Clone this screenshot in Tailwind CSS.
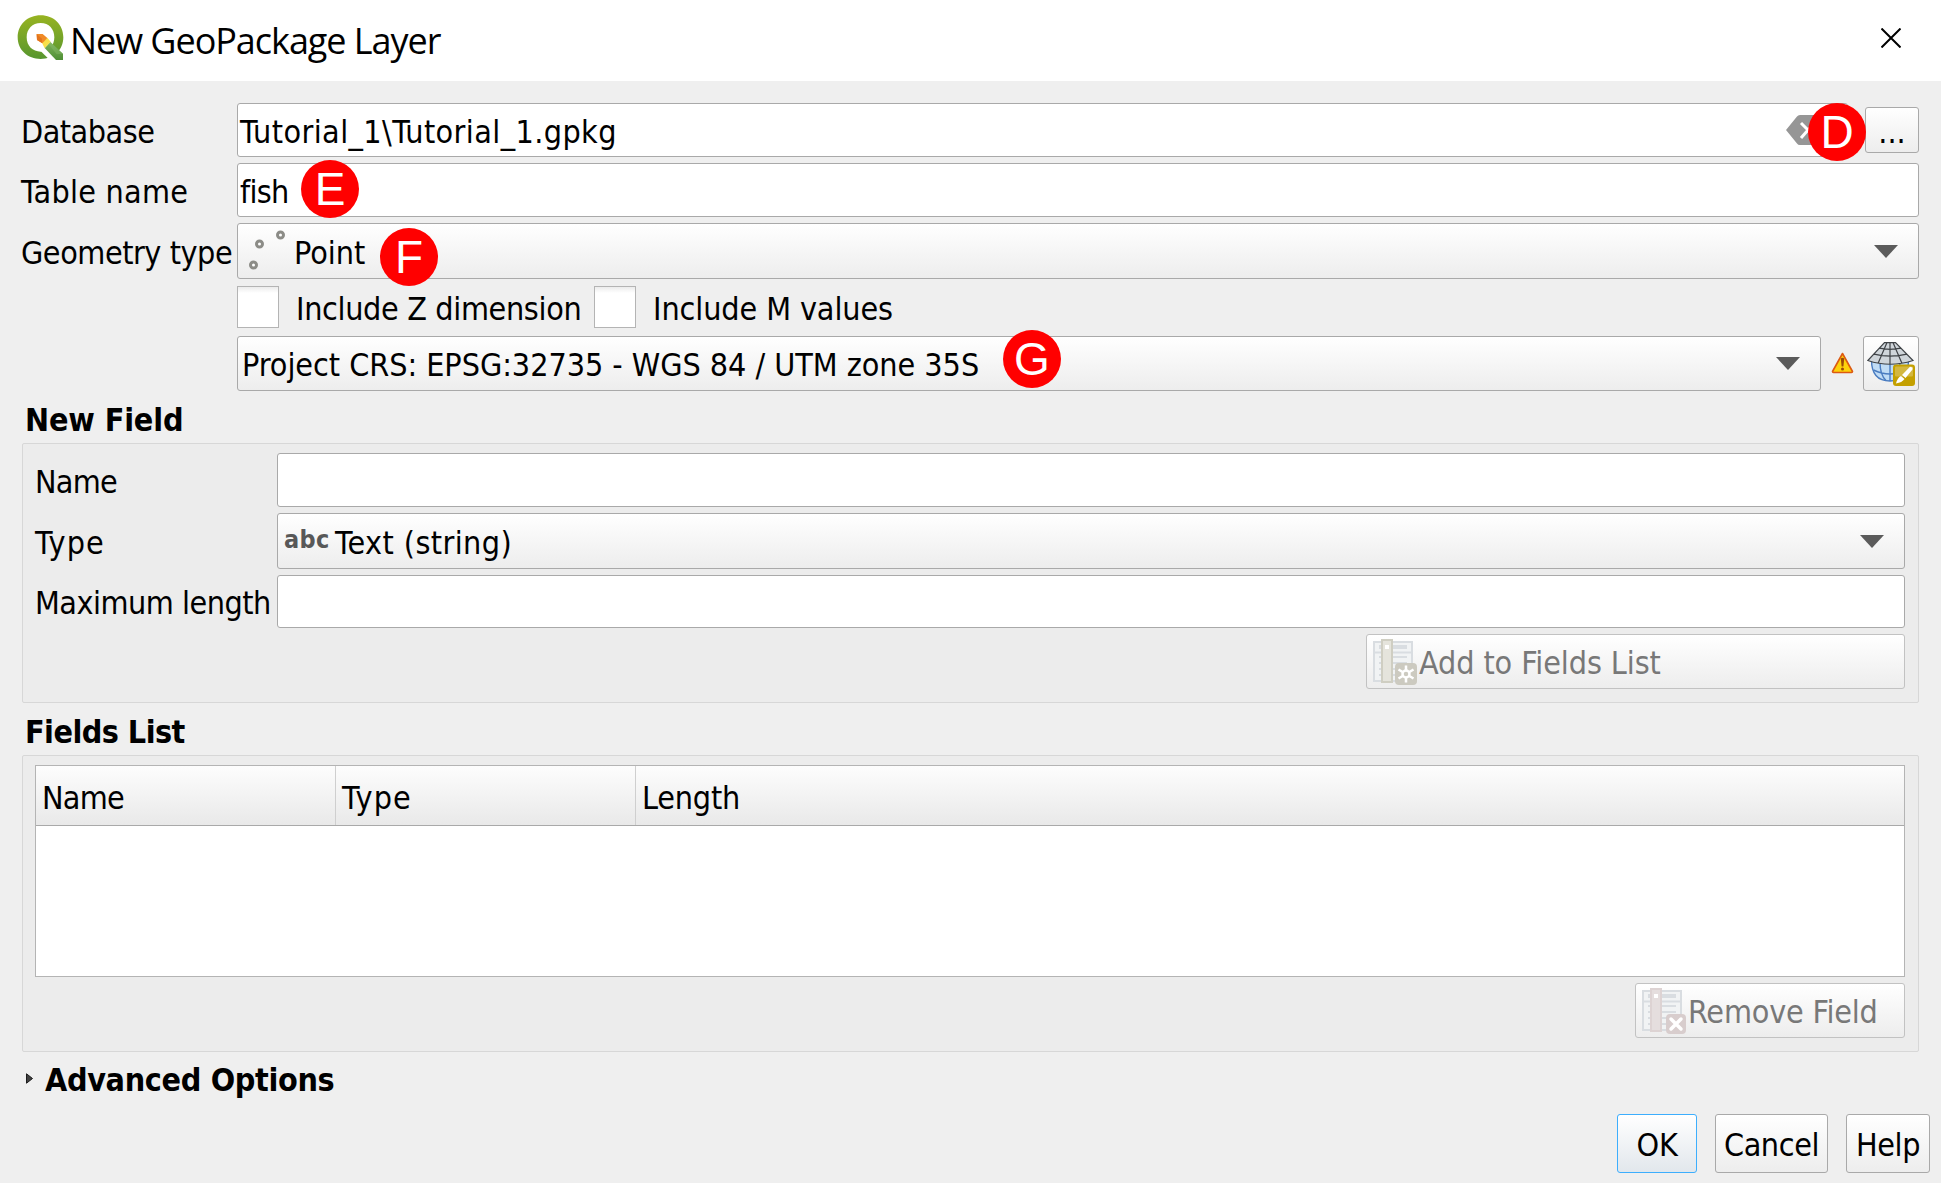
<!DOCTYPE html>
<html lang="en">
<head>
<meta charset="utf-8">
<title>New GeoPackage Layer</title>
<script src="https://cdn.jsdelivr.net/npm/@tailwindcss/browser@4"></script>
</head>
<body class="flex h-[1183px] w-[1941px] flex-col overflow-hidden bg-[#efefef] font-['DejaVu_Sans_Condensed','DejaVu_Sans',sans-serif] text-[32px] leading-[40px] whitespace-nowrap text-black">

<header class="flex h-[81px] shrink-0 items-start bg-white pt-[15px] pl-[17px]">
  <svg class="h-[46px] w-[47px]" viewBox="51 45 141 138">
    <defs>
      <linearGradient id="ring" x1="0" y1="0" x2="0" y2="1"><stop offset="0" stop-color="#97b321"/><stop offset="1" stop-color="#57962f"/></linearGradient>
      <linearGradient id="tail" x1="0" y1="0" x2="0" y2="1"><stop offset="0" stop-color="#7db35a"/><stop offset="1" stop-color="#4f8f35"/></linearGradient>
    </defs>
    <path fill="url(#ring)" fill-rule="evenodd" d="M122 46C161 46 190 74 190 112C190 150 161 177 122 177C83 177 53 150 53 112C53 74 83 46 122 46ZM122 69C97 69 80 87 80 112C80 138 98 155 122 155C146 155 163 137 163 112C163 87 147 69 122 69Z"/>
    <path fill="#fff" d="M120 143L134 145L150 155L172 181H150L121 152Z"/>
    <path fill="#fff" d="M152 122L163 112L192 147V166Z" opacity=".0"/>
    <path fill="url(#tail)" d="M134 144L151 126L189 161V180H168Z"/>
    <path fill="#8fbf70" d="M140 125L151 126L189 161L170 163Z" opacity=".35"/>
    <path fill="#f8e04a" d="M125 127L142 113L152 125L134 145Z"/>
    <path fill="#f08a26" d="M110 102H128L142 114L127 130L111 120Z"/>
    <path fill="#e3741d" d="M110 102L126 116V129L111 120Z"/>
  </svg>
  <h1 class="pt-[6px] pl-[6px] font-['Open_Sans','Noto_Sans',sans-serif] text-[36px] leading-[40px] tracking-[-1.05px]">New GeoPackage Layer</h1>
  <svg class="mt-[13px] mr-[40px] ml-auto h-5 w-5" viewBox="0 0 20 20" stroke="#000" stroke-width="2"><path d="M.5 .5L19.5 19.5M19.5 .5L.5 19.5"/></svg>
</header>

<main class="flex flex-1 flex-col pt-[22px] pl-[22px]">
  <section class="grid w-[1897px] grid-cols-[215px_1682px] gap-y-[6px]">
    <label class="-ml-px flex h-[54px] items-center pt-1 tracking-[-0.5px]">Database</label>
    <div class="flex h-[54px] items-center justify-between">
      <div class="relative flex h-[54px] w-[1611px] items-center rounded-[3px] border border-[#a9a9a9] bg-white pt-1 pl-[2px] tracking-[0.4px]">Tutorial_1\Tutorial_1.gpkg
        <svg class="absolute top-[11px] left-[1548px] h-[30px] w-[42px]" viewBox="0 0 42 30"><path fill="#969696" d="M0 15L11 1.500Q12 0 14 0H42V30H14Q12 30 11 28.500Z"/><path d="M15 8L22 15L15 23M29 8L22 15L29 23" fill="none" stroke="#fff" stroke-width="3"/></svg>
        <span class="absolute top-[-1px] left-[1570px] flex h-[58px] w-[58px] items-center justify-center rounded-full bg-[#f00] font-['Liberation_Sans',Arial,sans-serif] text-[46px] leading-[58px] tracking-normal text-white">D</span>
      </div>
      <button class="flex h-[46px] w-[54px] items-center justify-center rounded-[3px] border border-[#a9a9a9] bg-linear-to-b from-white to-[#ededed] pt-1">...</button>
    </div>

    <label class="-ml-px flex h-[54px] items-center pt-1 tracking-[0.25px]">Table name</label>
    <div class="relative flex h-[54px] items-center rounded-[3px] border border-[#a9a9a9] bg-white pt-1 pl-[2px] tracking-[-0.7px]">fish
      <span class="absolute top-[-4px] left-[63px] flex h-[58px] w-[58px] items-center justify-center rounded-full bg-[#f00] font-['Liberation_Sans',Arial,sans-serif] text-[46px] leading-[58px] tracking-normal text-white">E</span>
    </div>

    <label class="-ml-px flex h-[56px] items-center pt-1 tracking-[-0.45px]">Geometry type</label>
    <div class="relative flex h-[56px] items-center rounded-[3px] border border-[#a9a9a9] bg-linear-to-b from-white to-[#ededed] pl-[11px]">
      <svg class="mt-[-3px] h-[40px] w-[37px]" viewBox="0 0 37 40" fill="#fff" stroke="#8c8c87" stroke-width="3"><circle cx="4.500" cy="35" r="3"/><circle cx="10.500" cy="14" r="3"/><circle cx="31.500" cy="5" r="3"/></svg>
      <span class="pt-1 pl-[8px]">Point</span>
      <span class="absolute top-[4px] left-[142px] flex h-[58px] w-[58px] items-center justify-center rounded-full bg-[#f00] font-['Liberation_Sans',Arial,sans-serif] text-[46px] leading-[58px] tracking-normal text-white">F</span>
      <svg class="mr-[20px] ml-auto h-[13px] w-6" viewBox="0 0 24 13"><path fill="#5b5b5b" d="M0 0H24L12 13Z"/></svg>
    </div>
  </section>

  <div class="mt-[7px] ml-[215px] flex h-[42px] items-center">
    <span class="h-[42px] w-[42px] border border-[#b4b4b4] bg-linear-to-b from-[#ececec] to-white to-15%"></span>
    <label class="w-[315px] pt-1 pl-[17px] tracking-[-0.35px]">Include Z dimension</label>
    <span class="h-[42px] w-[42px] border border-[#b4b4b4] bg-linear-to-b from-[#ececec] to-white to-15%"></span>
    <label class="pt-1 pl-[17px] tracking-[-0.1px]">Include M values</label>
  </div>

  <div class="mt-[8px] ml-[215px] flex h-[55px] w-[1682px] items-center">
    <div class="relative flex h-[55px] w-[1584px] items-center rounded-[3px] border border-[#a9a9a9] bg-linear-to-b from-white to-[#ededed] pl-1">
      <span class="pt-[2px] tracking-[-0.04px]">Project CRS: EPSG:32735 - WGS 84 / UTM zone 35S</span>
      <span class="absolute top-[-7px] left-[765px] flex h-[58px] w-[58px] items-center justify-center rounded-full bg-[#f00] font-['Liberation_Sans',Arial,sans-serif] text-[46px] leading-[58px] tracking-normal text-white">G</span>
      <svg class="mr-[20px] ml-auto h-[13px] w-6" viewBox="0 0 24 13"><path fill="#5b5b5b" d="M0 0H24L12 13Z"/></svg>
    </div>
    <svg class="mt-[-2px] ml-[10px] h-[22px] w-[23px]" viewBox="0 0 23 22"><path d="M11.500 1.500L21.500 19.500Q21.500 20.500 20.500 20.500H2.500Q1.500 20.500 1.500 19.500Z" fill="#fdd20b" stroke="#dc5a12" stroke-width="1.600" stroke-linejoin="round"/><path d="M9.800 6.500Q11.500 5 13.200 6.500L12.400 14.500H10.600Z" fill="#9a4a08"/><circle cx="11.500" cy="17" r="1.500" fill="#9a4a08"/></svg>
    <button class="ml-auto flex h-[55px] w-[56px] items-center justify-center rounded-[3px] border border-[#a9a9a9] bg-linear-to-b from-white to-[#ededed]">
      <svg class="mt-[2px] h-[46px] w-[48px]" viewBox="0 0 48 46">
        <path d="M4.500 18Q4.500 39 23 39Q41.500 39 41.500 18Z" fill="#c0dcf5" stroke="#4a7cc0" stroke-width="1.400"/>
        <path d="M6.500 28Q23 36 39 28M23 20V39M13 20Q13 33 19 38.500M33 20Q33 33 27 38.500" fill="none" stroke="#4a7cc0" stroke-width="1.400"/>
        <path d="M17.500 .6H28.500L46 18.500Q23 26 .800 18.500Z" fill="#cfd5da"/>
        <path d="M17.500 .6H28.500L46 18.500Q23 26 .800 18.500ZM12 6.200Q23 8.500 34 6.200M7 12.200Q23 16 40 12.200M23 .6V22M20 .6L11 21.500M26 .6L35 21.500" fill="none" stroke="#3f4347" stroke-width="1.200"/>
        <rect x="26" y="22.500" width="22" height="21.500" rx="3" fill="#c4a000"/>
        <rect x="28" y="24.500" width="18" height="10" rx="1" fill="#d3b740"/>
        <path d="M45.500 25.500L43 24.800L35 33L38.500 36L45.500 27.500ZM34 34L37.500 37Q35 40.500 29 41.500Q30.500 35.500 34 34Z" fill="#fff"/>
      </svg>
    </button>
  </div>

  <h2 class="mt-[10px] ml-[3px] h-[42px] leading-[38px] font-bold tracking-[-0.15px]">New Field</h2>
  <section class="h-[260px] w-[1897px] rounded-[2px] border border-[#d7d7d7] bg-[#ececec] pt-[9px] pl-[12px]">
    <div class="grid grid-cols-[242px_1628px] gap-y-[6px]">
      <label class="flex h-[54px] items-center pt-1 tracking-[-0.7px]">Name</label>
      <div class="h-[54px] rounded-[3px] border border-[#a9a9a9] bg-white"></div>
      <label class="flex h-[56px] items-center pt-1 tracking-[1px]">Type</label>
      <div class="flex h-[56px] items-center rounded-[3px] border border-[#a9a9a9] bg-linear-to-b from-white to-[#ededed] pl-[6px]">
        <span class="mt-[-2px] w-[50px] text-[25px] leading-[34px] font-bold tracking-[0.4px] text-[#585858]">abc</span>
        <span class="pt-1 pl-px tracking-[0.4px]">Text (string)</span>
        <svg class="mr-[20px] ml-auto h-[13px] w-6" viewBox="0 0 24 13"><path fill="#5b5b5b" d="M0 0H24L12 13Z"/></svg>
      </div>
      <label class="flex h-[53px] items-center pt-[3px] tracking-[-0.5px]">Maximum length</label>
      <div class="h-[53px] rounded-[3px] border border-[#a9a9a9] bg-white"></div>
    </div>
    <button class="mt-[6px] ml-[1331px] flex h-[55px] w-[539px] items-center rounded-[3px] border border-[#c2c2c2] bg-linear-to-b from-white to-[#ededed] pl-[6px] text-[#787878]">
      <svg class="mt-[-2px] h-[54px] w-[46px]" viewBox="0 0 46 54">
        <rect x="1" y="8" width="38" height="39" fill="#f1f3f4" stroke="#d9dde1" stroke-width="2"/>
        <path d="M1 18.500H39M6 23H34M6 29H34M6 35H34M6 41H34" stroke="#d9dde1" stroke-width="2"/>
        <rect x="6" y="11" width="28" height="4" fill="#d9dde1"/>
        <rect x="9" y="6" width="10" height="42" fill="#e5e4dc" stroke="#cfcec2" stroke-width="2"/><rect x="12" y="11" width="4" height="4" fill="#fff"/>
        <rect x="22" y="29" width="22" height="22" rx="4" fill="#cccac0"/>
        <path d="M33 31.500V48.500M25.500 35.500L40.500 44.500M40.500 35.500L25.500 44.500" stroke="#fff" stroke-width="2.500"/><circle cx="33" cy="40" r="3.500" fill="#cccac0" stroke="#fff" stroke-width="2.500"/>
      </svg>
      <span class="pt-[2px] tracking-[-0.1px]">Add to Fields List</span>
    </button>
  </section>

  <h2 class="mt-[10px] ml-[3px] h-[42px] leading-[38px] font-bold tracking-[-0.55px]">Fields List</h2>
  <section class="h-[297px] w-[1897px] rounded-[2px] border border-[#d7d7d7] bg-[#ececec] pt-[9px] pl-[12px]">
    <div class="h-[212px] w-[1870px] border border-[#b4b4b4] bg-white">
      <div class="grid h-[60px] grid-cols-[300px_300px_1fr] border-b border-[#a9a9a9] bg-linear-to-b from-[#fdfdfd] to-[#e9e9e9]">
        <div class="flex items-center border-r border-[#cfcfcf] pt-[5px] pl-[6px] tracking-[-0.7px]">Name</div>
        <div class="flex items-center border-r border-[#cfcfcf] pt-[5px] pl-[6px] tracking-[1px]">Type</div>
        <div class="flex items-center pt-[5px] pl-[6px] tracking-[-0.2px]">Length</div>
      </div>
    </div>
    <button class="mt-[6px] ml-[1600px] flex h-[55px] w-[270px] items-center rounded-[3px] border border-[#c2c2c2] bg-linear-to-b from-white to-[#ededed] pl-[6px] text-[#787878]">
      <svg class="mt-[-2px] h-[54px] w-[46px]" viewBox="0 0 46 54">
        <rect x="1" y="8" width="38" height="39" fill="#f1f3f4" stroke="#d9dde1" stroke-width="2"/>
        <path d="M1 18.500H39M6 23H34M6 29H34M6 35H34M6 41H34" stroke="#d9dde1" stroke-width="2"/>
        <rect x="6" y="11" width="28" height="4" fill="#d9dde1"/>
        <rect x="9" y="6" width="10" height="42" fill="#e5dede" stroke="#ddd3d3" stroke-width="2"/><rect x="12" y="11" width="4" height="4" fill="#fff"/>
        <rect x="24" y="31" width="20" height="20" rx="4" fill="#d8cdcd"/>
        <path d="M29 36L39 46M39 36L29 46" stroke="#fff" stroke-width="3.500" stroke-linecap="round"/>
      </svg>
      <span class="pt-[2px] tracking-[-0.2px]">Remove Field</span>
    </button>
  </section>

  <div class="mt-[7px] ml-1 flex h-[42px] items-center">
    <svg class="mt-[-4px] h-[11px] w-[7px]" viewBox="0 0 7 11"><path fill="#404040" stroke="#1c1c1c" d="M.5 .8L6.500 5.500L.5 10.200Z"/></svg>
    <h2 class="pl-[12px] font-bold tracking-[-0.35px]">Advanced Options</h2>
  </div>

  <footer class="mt-[13px] mr-[11px] flex h-[59px] justify-end gap-[18px]">
    <button class="flex w-[80px] items-center justify-center rounded-[3px] border border-[#3daefd] bg-linear-to-b from-white to-[#e2e7ec] pt-[3px] tracking-[-0.3px]">OK</button>
    <button class="flex w-[113px] items-center justify-center rounded-[3px] border border-[#a9a9a9] bg-linear-to-b from-white to-[#ededed] pt-[3px] tracking-[-0.4px]">Cancel</button>
    <button class="flex w-[84px] items-center justify-center rounded-[3px] border border-[#a9a9a9] bg-linear-to-b from-white to-[#ededed] pt-[3px] tracking-[-0.4px]">Help</button>
  </footer>
</main>
</body>
</html>
